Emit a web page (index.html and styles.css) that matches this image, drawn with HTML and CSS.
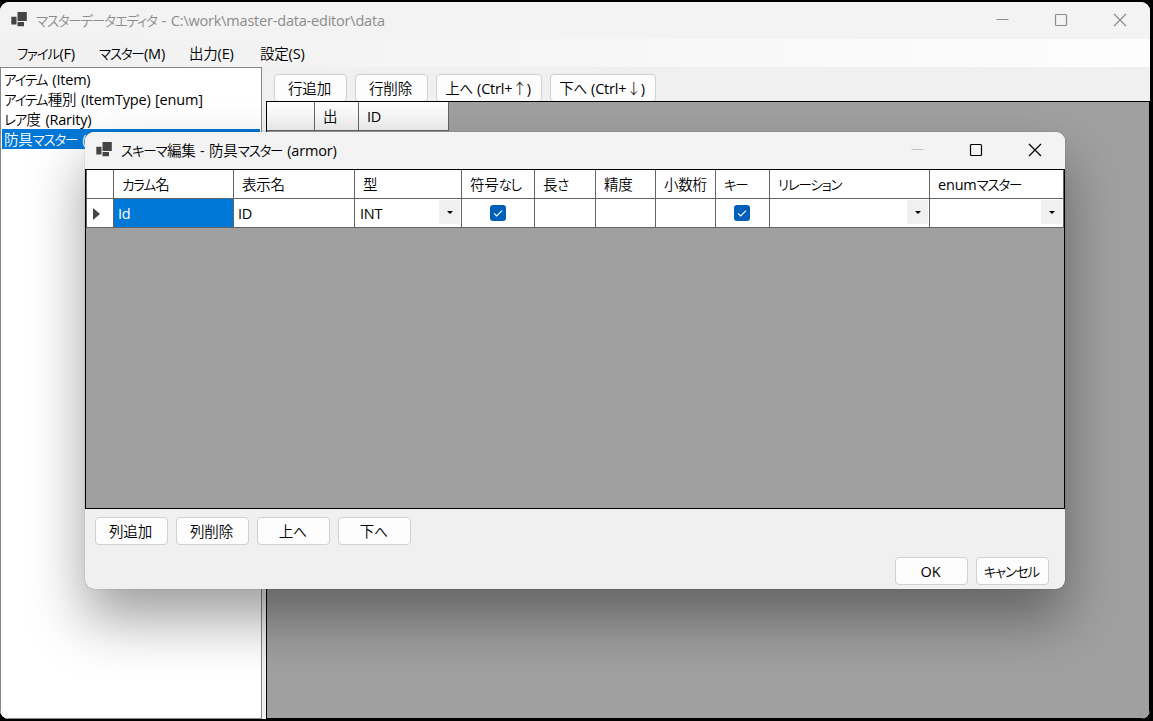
FILE: index.html
```html
<!DOCTYPE html>
<html lang="ja">
<head>
<meta charset="UTF-8">
<title>マスターデータエディタ</title>
<link rel="stylesheet" href="styles.css">
</head>
<body>

<div class="window">
  <div class="titlebar">
    <svg class="app-icon" width="16" height="16" viewBox="0 0 16 16"><path d="M6.500 0h9.300v9H6.500z"/><path d="M0.300 4.800h5.200v7.700H0.300z"/><path d="M6.500 10h6.500v4.200H6.500z"/></svg>
    <span class="title"><span class="kana">マスターデータエディタ</span> - C:\work\master-data-editor\data</span>
    <div class="controls">
      <svg width="12" height="12" viewBox="0 0 12 12"><path d="M0.500 5.500h12"/></svg>
      <svg width="12" height="12" viewBox="0 0 12 12"><rect x="0.500" y="0.500" width="11" height="11" rx="1"/></svg>
      <svg width="12" height="12" viewBox="0 0 12 12"><path d="M0 0l12 12M12 0L0 12"/></svg>
    </div>
  </div>

  <div class="menubar">
    <span class="m-file"><span class="kana">ファイル</span>(F)</span>
    <span class="m-master"><span class="kana">マスター</span>(M)</span>
    <span class="m-out">出力(E)</span>
    <span class="m-set">設定(S)</span>
  </div>

  <div class="main">
    <ul class="master-list">
      <li><span class="kana">アイテム</span> (Item)</li>
      <li><span class="kana">アイテム</span>種別 (ItemType) [enum]</li>
      <li><span class="kana">レア</span>度 (Rarity)</li>
      <li class="selected">防具<span class="kana">マスター</span> (</li>
    </ul>
    <div class="content">
      <div class="toolbar">
        <button>行追加</button>
        <button>行削除</button>
        <button class="wide">上<span class="kana">へ</span> (Ctrl+<span class="arrow">↑</span>)</button>
        <button class="wide">下<span class="kana">へ</span> (Ctrl+<span class="arrow">↓</span>)</button>
      </div>
      <div class="data-grid">
        <div class="data-header"><div></div><div>出</div><div>ID</div></div>
      </div>
    </div>
  </div>
</div>

<div class="dialog">
  <div class="titlebar">
    <svg class="app-icon" width="16" height="16" viewBox="0 0 16 16"><path d="M6.500 0h9.300v9H6.500z"/><path d="M0.300 4.800h5.200v7.700H0.300z"/><path d="M6.500 10h6.500v4.200H6.500z"/></svg>
    <span class="title"><span class="kana">スキーマ</span>編集 - 防具<span class="kana">マスター</span> (armor)</span>
    <div class="controls">
      <svg class="disabled" width="12" height="12" viewBox="0 0 12 12"><path d="M0.500 5.500h12"/></svg>
      <svg width="12" height="12" viewBox="0 0 12 12"><rect x="0.500" y="0.500" width="11" height="11" rx="1"/></svg>
      <svg width="12" height="12" viewBox="0 0 12 12"><path d="M0 0l12 12M12 0L0 12"/></svg>
    </div>
  </div>

  <div class="schema">
    <div class="schema-grid">
      <div class="th"></div>
      <div class="th"><span class="kana">カラム</span>名</div>
      <div class="th">表示名</div>
      <div class="th">型</div>
      <div class="th">符号<span class="kana">なし</span></div>
      <div class="th">長<span class="kana">さ</span></div>
      <div class="th">精度</div>
      <div class="th">小数桁</div>
      <div class="th"><span class="kana">キー</span></div>
      <div class="th"><span class="kana">リレーション</span></div>
      <div class="th">enum<span class="kana">マスター</span></div>

      <div class="td row-head"><svg width="7" height="12" viewBox="0 0 7 12"><path d="M0 0l7 6-7 6z"/></svg></div>
      <div class="td current">Id</div>
      <div class="td">ID</div>
      <div class="td combo">INT<i></i></div>
      <div class="td check"><svg width="16" height="16" viewBox="0 0 16 16"><rect width="16" height="16" rx="3"/><path d="M4 8.300l2.700 2.700L12 5.700"/></svg></div>
      <div class="td"></div>
      <div class="td"></div>
      <div class="td"></div>
      <div class="td check"><svg width="16" height="16" viewBox="0 0 16 16"><rect width="16" height="16" rx="3"/><path d="M4 8.300l2.700 2.700L12 5.700"/></svg></div>
      <div class="td combo"><i></i></div>
      <div class="td combo"><i></i></div>
    </div>
  </div>

  <div class="edit-buttons">
    <button>列追加</button>
    <button>列削除</button>
    <button>上<span class="kana">へ</span></button>
    <button>下<span class="kana">へ</span></button>
  </div>
  <div class="dialog-buttons">
    <button>OK</button>
    <button><span class="kana">キャンセル</span></button>
  </div>
</div>

</body>
</html>
```

FILE: styles.css
```css
* {
  box-sizing: border-box;
}
body {
  margin: 0;
  height: 721px;
  overflow: hidden;
  padding-top: 2px;
  background: #000;
  color: #000;
  font: 14.5px/20px "Open Sans", "Noto Sans CJK JP DemiLight", "Noto Sans CJK JP Light", "Noto Sans CJK JP", sans-serif;
  letter-spacing: -0.2px;
  word-spacing: 1px;
  white-space: nowrap;
}
.kana {
  font-size: 13.5px;
  font-feature-settings: "palt";
  letter-spacing: -1.2px;
  margin-right: 0.5px;
}
.window {
  width: 1150px;
  height: 717px;
  display: flex;
  flex-direction: column;
  background: #f0f0f0;
  border-radius: 9px;
  overflow: hidden;
}
.titlebar {
  height: 37px;
  flex: none;
  display: flex;
  align-items: center;
  padding: 0 24px 1px 11px;
  background: #f3f3f3;
}
.window .titlebar {
  color: #8c8c8c;
}
.title {
  padding-top: 2px;
}
.app-icon {
  fill: #444;
  margin-right: 9px;
}
.controls {
  margin-left: auto;
  display: flex;
  gap: 47px;
}
.controls svg {
  fill: none;
  stroke: currentColor;
  stroke-width: 1.2;
  overflow: visible;
}
.controls .disabled {
  color: #c0c0c0;
}

/* menu */
.menubar {
  height: 28px;
  flex: none;
  display: flex;
  align-items: center;
  padding: 1px 0 0 17px;
  background: linear-gradient(to right, #f0f0f0, #fdfdfd);
}
.m-file {
  width: 82px;
}
.m-master {
  width: 90px;
}
.m-out {
  width: 71px;
}

.main {
  flex: 1;
  display: flex;
  gap: 4px;
  min-height: 0;
}
.master-list {
  width: 262px;
  margin: 0;
  padding: 1px;
  list-style: none;
  background: #fff;
  border: 1px solid #828790;
}
.master-list li {
  height: 20px;
  padding-left: 2px;
  line-height: 21px;
}
.master-list .selected {
  background: #0078d7;
  color: #fff;
}
.content {
  flex: 1;
  display: flex;
  flex-direction: column;
}
.toolbar {
  height: 34px;
  display: flex;
  gap: 8px;
  padding: 7px 0 0 8px;
}
button {
  flex: none;
  width: 73px;
  height: 28px;
  padding: 1px 2px 0 0;
  font: inherit;
  letter-spacing: inherit;
  word-spacing: inherit;
  color: inherit;
  background: #fdfdfd;
  border: 1px solid #d0d0d0;
  border-radius: 4px;
}
button.wide {
  width: 106px;
}
.arrow {
  font-family: "Noto Sans CJK JP", sans-serif;
  font-weight: 300;
}
.data-grid {
  flex: 1;
  background: #a0a0a0;
  border: 1px solid #000;
}
.data-header {
  display: grid;
  grid-template-columns: 48px 44px 90px;
  width: 182px;
  height: 29px;
  line-height: 29px;
  background: linear-gradient(#fff, #f0f0f0);
  border-bottom: 1px solid #646464;
}
.data-header div {
  padding-left: 8px;
  border-right: 1px solid #646464;
}

/* schema editor */
.dialog {
  position: absolute;
  left: 85px;
  top: 132px;
  width: 980px;
  height: 457px;
  background: #f0f0f0;
  border-radius: 9px;
  box-shadow: 0 0 1px rgba(0, 0, 0, 0.5), 0 30px 56px rgba(0, 0, 0, 0.38);
  overflow: hidden;
}
.schema {
  height: 340px;
  background: #a0a0a0;
  border: 1px solid #000;
}
.schema-grid {
  display: grid;
  grid-template-columns: 27px 120px 121px 107px 73px 61px 60px 60px 54px 160px 134px;
  grid-template-rows: 29px 29px;
  border-left: 1px solid #646464;
}
.th, .td {
  line-height: 30px;
  background: #fff;
  border-right: 1px solid #646464;
  border-bottom: 1px solid #646464;
}
.th {
  padding-left: 8px;
}
.td {
  padding-left: 4px;
}
.row-head {
  display: flex;
  align-items: center;
  padding: 2px 0 0 6px;
  fill: #444;
}
.current {
  background: #0078d7;
  color: #fff;
}
.combo {
  display: flex;
  justify-content: space-between;
  padding: 1px 1px 3px 5px;
  line-height: 28px;
}
.combo i {
  width: 21px;
  height: 24px;
  display: flex;
  align-items: center;
  justify-content: center;
  margin-left: auto;
  background: #f0f0f0;
}
.combo i::after {
  content: "";
  border: 3px solid transparent;
  border-top-color: #000;
  border-bottom: 0;
}
.check {
  display: flex;
  align-items: center;
  justify-content: center;
  padding: 0 1px 0 0;
}
.check rect {
  fill: #005fb8;
}
.check path {
  fill: none;
  stroke: #fff;
  stroke-width: 1.1;
}
.edit-buttons {
  display: flex;
  gap: 8px;
  padding: 8px 10px;
}
.dialog-buttons {
  display: flex;
  justify-content: flex-end;
  gap: 8px;
  padding: 4px 16px;
}
```
